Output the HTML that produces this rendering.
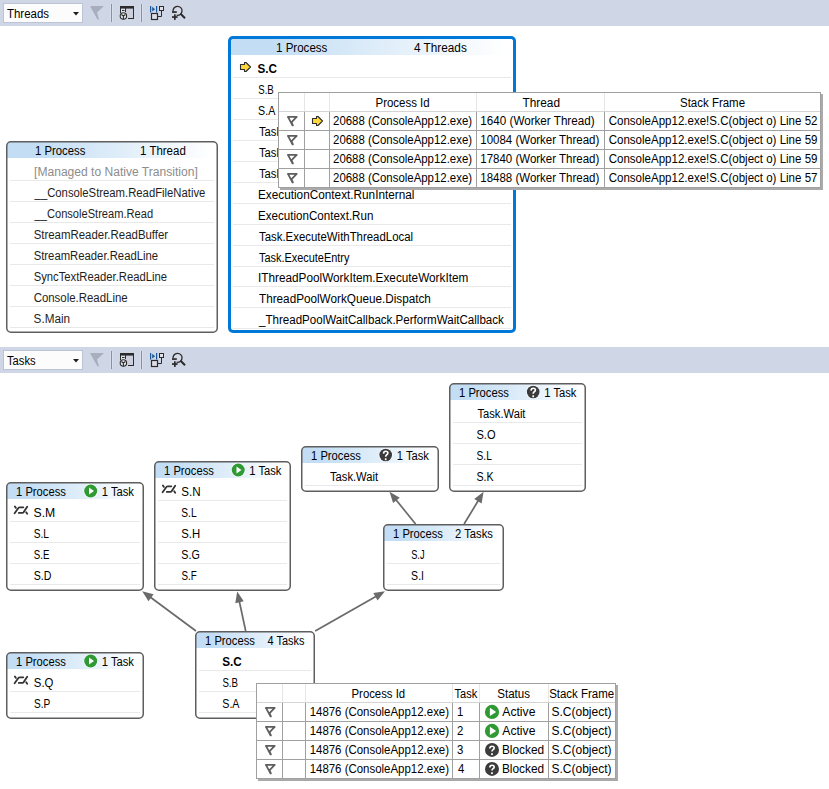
<!DOCTYPE html>
<html><head><meta charset="utf-8"><style>
html,body{margin:0;padding:0;background:#fff;overflow:hidden}
svg{display:block}
text{font-family:"Liberation Sans",sans-serif;font-size:12px}
</style></head><body>
<svg width="829" height="789" viewBox="0 0 829 789">
<rect width="829" height="789" fill="#ffffff"/>
<rect x="0" y="0" width="829" height="26" fill="#cfd6e5"/>
<rect x="3.5" y="3.5" width="79" height="19" fill="#fcfcfc" stroke="#bcc4d6" stroke-width="1"/>
<path d="M73 12 h6 l-3 3.5 z" fill="#1e1e1e"/>
<path d="M90 6 H104 L97 12.5 L99 19.5 L97.5 19.5 Z" fill="#a8aebb"/>
<rect x="111" y="4" width="1" height="18" fill="#8592a6"/>
<rect x="110" y="4" width="1" height="18" fill="#d8deeb"/>
<rect x="112" y="4" width="1" height="18" fill="#d8deeb"/>
<rect x="141" y="4" width="1" height="18" fill="#8592a6"/>
<rect x="140" y="4" width="1" height="18" fill="#d8deeb"/>
<rect x="142" y="4" width="1" height="18" fill="#d8deeb"/>
<rect x="126" y="9" width="7" height="9" fill="#cdd0dc"/>
<rect x="121" y="8" width="4" height="10" fill="#dde1ee"/>
<rect x="120" y="6" width="14" height="2.6" fill="#2b2b2b"/>
<rect x="120" y="6" width="1" height="7" fill="#2b2b2b"/>
<rect x="133" y="6" width="1" height="13" fill="#2b2b2b"/>
<rect x="128" y="18" width="6" height="1" fill="#2b2b2b"/>
<rect x="125" y="8" width="1" height="4" fill="#2b2b2b"/>
<rect x="122" y="10" width="2.5" height="1" fill="#2b2b2b"/>
<circle cx="123.4" cy="16" r="3.2" fill="#e4e6f2" stroke="#2b2b2b" stroke-width="1.1"/>
<path d="M123.4 16 L121.4 14.5 M123.4 16 L125.4 14.5 M123.4 16 V19.3" stroke="#2b2b2b" stroke-width="1.1" fill="none"/>
<rect x="150" y="6" width="1.2" height="6.5" fill="#1b5597"/>
<rect x="156" y="6" width="1.2" height="6.5" fill="#1b5597"/>
<path d="M152.2 6.8 l2.9 2.4 l-2.9 2.4 z" fill="#1b5597"/>
<rect x="159.5" y="6.5" width="4" height="4" fill="#e0e0ea" stroke="#2b2b2b" stroke-width="1"/>
<path d="M161.5 11 V16.5 H157" fill="none" stroke="#2b2b2b" stroke-width="1"/>
<rect x="151.5" y="13.5" width="6" height="6" fill="#dcdde8" stroke="#2b2b2b" stroke-width="1.2"/>
<path d="M173.1 11.6 A4.5 4.5 0 1 1 176.6 15.2" fill="#d6d9e6" stroke="#2b2b2b" stroke-width="1.3"/>
<path d="M180.6 13.8 L185 18.2" stroke="#2b2b2b" stroke-width="2"/>
<rect x="172" y="11.2" width="4.8" height="1.7" fill="#2b2b2b"/>
<rect x="172" y="16.2" width="5.6" height="1.7" fill="#2b2b2b"/>
<rect x="174" y="14.3" width="1.7" height="5.6" fill="#2b2b2b"/>
<text x="7.00" y="18" textLength="42.03" lengthAdjust="spacingAndGlyphs" fill="#000000">Threads</text>
<defs><linearGradient id="n1g" x1="0" x2="1" y1="0" y2="0"><stop offset="0.13" stop-color="#c2ddf4"/><stop offset="0.98" stop-color="#ffffff"/></linearGradient></defs>
<rect x="6.75" y="141.75" width="210.5" height="190.5" rx="4.2" fill="#ffffff"/>
<path d="M7 158 V145.5 a3.5 3.5 0 0 1 3.5 -3.5 H213.5 a3.5 3.5 0 0 1 3.5 3.5 V158 Z" fill="url(#n1g)"/>
<rect x="10" y="180" width="204" height="1" fill="#e9e9e9"/>
<rect x="10" y="201" width="204" height="1" fill="#e9e9e9"/>
<rect x="10" y="222" width="204" height="1" fill="#e9e9e9"/>
<rect x="10" y="243" width="204" height="1" fill="#e9e9e9"/>
<rect x="10" y="264" width="204" height="1" fill="#e9e9e9"/>
<rect x="10" y="285" width="204" height="1" fill="#e9e9e9"/>
<rect x="10" y="306" width="204" height="1" fill="#e9e9e9"/>
<rect x="10" y="327" width="204" height="1" fill="#e9e9e9"/>
<rect x="6.75" y="141.75" width="210.5" height="190.5" rx="4.2" fill="none" stroke="#5e5e5e" stroke-width="1.5"/>
<text x="35.06" y="155" textLength="50.28" lengthAdjust="spacingAndGlyphs" fill="#000000">1 Process</text>
<text x="140.04" y="155" textLength="45.73" lengthAdjust="spacingAndGlyphs" fill="#000000">1 Thread</text>
<text x="34.09" y="176" textLength="163.68" lengthAdjust="spacingAndGlyphs" fill="#8c8c8c">[Managed to Native Transition]</text>
<text x="34.60" y="197" textLength="170.81" lengthAdjust="spacingAndGlyphs" fill="#1e1e1e">__ConsoleStream.ReadFileNative</text>
<text x="34.60" y="218" textLength="118.47" lengthAdjust="spacingAndGlyphs" fill="#1e1e1e">__ConsoleStream.Read</text>
<text x="33.65" y="239" textLength="134.55" lengthAdjust="spacingAndGlyphs" fill="#1e1e1e">StreamReader.ReadBuffer</text>
<text x="33.66" y="260" textLength="124.43" lengthAdjust="spacingAndGlyphs" fill="#1e1e1e">StreamReader.ReadLine</text>
<text x="33.66" y="281" textLength="133.43" lengthAdjust="spacingAndGlyphs" fill="#1e1e1e">SyncTextReader.ReadLine</text>
<text x="33.65" y="302" textLength="94.07" lengthAdjust="spacingAndGlyphs" fill="#1e1e1e">Console.ReadLine</text>
<text x="33.62" y="323" textLength="36.53" lengthAdjust="spacingAndGlyphs" fill="#1e1e1e">S.Main</text>
<defs><linearGradient id="n2g" x1="0" x2="1" y1="0" y2="0"><stop offset="0.13" stop-color="#c2ddf4"/><stop offset="0.98" stop-color="#ffffff"/></linearGradient></defs>
<rect x="228" y="36" width="288" height="297" rx="5" fill="#0078d7"/>
<rect x="231" y="39" width="282" height="291" rx="2.5" fill="#ffffff"/>
<path d="M231 55 V41.5 a2.5 2.5 0 0 1 2.5 -2.5 H510.5 a2.5 2.5 0 0 1 2.5 2.5 V55 Z" fill="url(#n2g)"/>
<rect x="233" y="77" width="278" height="1" fill="#e9e9e9"/>
<rect x="233" y="98" width="278" height="1" fill="#e9e9e9"/>
<rect x="233" y="119" width="278" height="1" fill="#e9e9e9"/>
<rect x="233" y="140" width="278" height="1" fill="#e9e9e9"/>
<rect x="233" y="161" width="278" height="1" fill="#e9e9e9"/>
<rect x="233" y="182" width="278" height="1" fill="#e9e9e9"/>
<rect x="233" y="203" width="278" height="1" fill="#e9e9e9"/>
<rect x="233" y="224" width="278" height="1" fill="#e9e9e9"/>
<rect x="233" y="245" width="278" height="1" fill="#e9e9e9"/>
<rect x="233" y="266" width="278" height="1" fill="#e9e9e9"/>
<rect x="233" y="286" width="278" height="1" fill="#e9e9e9"/>
<rect x="233" y="307" width="278" height="1" fill="#e9e9e9"/>
<rect x="233" y="328" width="278" height="1" fill="#e9e9e9"/>
<text x="276.04" y="52" textLength="51.31" lengthAdjust="spacingAndGlyphs" fill="#000000">1 Process</text>
<text x="414.00" y="52" textLength="52.80" lengthAdjust="spacingAndGlyphs" fill="#000000">4 Threads</text>
<path d="M240.5 64.5 H244.5 V62.5 H246 L250.5 67 L246 71.5 H244.5 V69.5 H240.5 Z" fill="#ffd83b" stroke="#2e2e2e" stroke-width="1.1" stroke-linejoin="round"/>
<text x="257.53" y="73" textLength="19.46" lengthAdjust="spacingAndGlyphs" fill="#000000" font-weight="bold">S.C</text>
<text x="258.19" y="94" textLength="15.58" lengthAdjust="spacingAndGlyphs" fill="#000000">S.B</text>
<text x="258.11" y="115" textLength="17.19" lengthAdjust="spacingAndGlyphs" fill="#000000">S.A</text>
<text x="259.00" y="136" textLength="48.09" lengthAdjust="spacingAndGlyphs" fill="#000000">Task.Wait</text>
<text x="259.00" y="157" textLength="48.09" lengthAdjust="spacingAndGlyphs" fill="#000000">Task.Wait</text>
<text x="259.00" y="178" textLength="48.09" lengthAdjust="spacingAndGlyphs" fill="#000000">Task.Wait</text>
<text x="258.02" y="199" textLength="156.41" lengthAdjust="spacingAndGlyphs" fill="#000000">ExecutionContext.RunInternal</text>
<text x="258.03" y="220" textLength="115.36" lengthAdjust="spacingAndGlyphs" fill="#000000">ExecutionContext.Run</text>
<text x="259.00" y="241" textLength="154.07" lengthAdjust="spacingAndGlyphs" fill="#000000">Task.ExecuteWithThreadLocal</text>
<text x="259.00" y="262" textLength="90.43" lengthAdjust="spacingAndGlyphs" fill="#000000">Task.ExecuteEntry</text>
<text x="258.02" y="282" textLength="210.29" lengthAdjust="spacingAndGlyphs" fill="#000000">IThreadPoolWorkItem.ExecuteWorkItem</text>
<text x="259.00" y="303" textLength="171.85" lengthAdjust="spacingAndGlyphs" fill="#000000">ThreadPoolWorkQueue.Dispatch</text>
<text x="259.00" y="324" textLength="244.88" lengthAdjust="spacingAndGlyphs" fill="#000000">_ThreadPoolWaitCallback.PerformWaitCallback</text>
<rect x="280" y="94" width="543" height="96" fill="#aaaaaa"/>
<rect x="278" y="92" width="543" height="96" fill="#ffffff"/>
<rect x="304" y="93" width="1" height="18" fill="#e6e6e6"/>
<rect x="304" y="112" width="1" height="75" fill="#a0a0a0"/>
<rect x="329" y="93" width="1" height="18" fill="#e6e6e6"/>
<rect x="329" y="112" width="1" height="75" fill="#a0a0a0"/>
<rect x="476" y="93" width="1" height="18" fill="#e6e6e6"/>
<rect x="476" y="112" width="1" height="75" fill="#a0a0a0"/>
<rect x="604" y="93" width="1" height="18" fill="#e6e6e6"/>
<rect x="604" y="112" width="1" height="75" fill="#a0a0a0"/>
<rect x="279" y="111" width="541" height="1" fill="#d4d4d4"/>
<rect x="279" y="130" width="541" height="1" fill="#a0a0a0"/>
<rect x="279" y="149" width="541" height="1" fill="#a0a0a0"/>
<rect x="279" y="168" width="541" height="1" fill="#a0a0a0"/>
<rect x="278.5" y="92.5" width="542" height="95" fill="none" stroke="#a0a0a0" stroke-width="1"/>
<text x="375.55" y="107" textLength="54.13" lengthAdjust="spacingAndGlyphs" fill="#000000">Process Id</text>
<text x="522.50" y="107" textLength="37.52" lengthAdjust="spacingAndGlyphs" fill="#000000">Thread</text>
<text x="680.04" y="107" textLength="64.97" lengthAdjust="spacingAndGlyphs" fill="#000000">Stack Frame</text>
<text x="333.05" y="125" textLength="139.01" lengthAdjust="spacingAndGlyphs" fill="#000000">20688 (ConsoleApp12.exe)</text>
<text x="480.33" y="125" textLength="114.26" lengthAdjust="spacingAndGlyphs" fill="#000000">1640 (Worker Thread)</text>
<text x="608.74" y="125" textLength="208.72" lengthAdjust="spacingAndGlyphs" fill="#000000">ConsoleApp12.exe!S.C(object o) Line 52</text>
<path d="M287.9 116.9 H296.7 L291.4 122.3 M288.1 117.1 L292.5 125.4 M291.3 122 L292.9 125.4" fill="none" stroke="#5e5e5e" stroke-width="1.8" stroke-linecap="round" stroke-linejoin="round"/>
<text x="333.05" y="144" textLength="139.01" lengthAdjust="spacingAndGlyphs" fill="#000000">20688 (ConsoleApp12.exe)</text>
<text x="480.34" y="144" textLength="118.94" lengthAdjust="spacingAndGlyphs" fill="#000000">10084 (Worker Thread)</text>
<text x="608.74" y="144" textLength="208.72" lengthAdjust="spacingAndGlyphs" fill="#000000">ConsoleApp12.exe!S.C(object o) Line 59</text>
<path d="M287.9 135.9 H296.7 L291.4 141.3 M288.1 136.1 L292.5 144.4 M291.3 141 L292.9 144.4" fill="none" stroke="#5e5e5e" stroke-width="1.8" stroke-linecap="round" stroke-linejoin="round"/>
<text x="333.05" y="163" textLength="139.01" lengthAdjust="spacingAndGlyphs" fill="#000000">20688 (ConsoleApp12.exe)</text>
<text x="480.34" y="163" textLength="118.94" lengthAdjust="spacingAndGlyphs" fill="#000000">17840 (Worker Thread)</text>
<text x="608.74" y="163" textLength="208.72" lengthAdjust="spacingAndGlyphs" fill="#000000">ConsoleApp12.exe!S.C(object o) Line 59</text>
<path d="M287.9 154.9 H296.7 L291.4 160.3 M288.1 155.1 L292.5 163.4 M291.3 160 L292.9 163.4" fill="none" stroke="#5e5e5e" stroke-width="1.8" stroke-linecap="round" stroke-linejoin="round"/>
<text x="333.05" y="182" textLength="139.01" lengthAdjust="spacingAndGlyphs" fill="#000000">20688 (ConsoleApp12.exe)</text>
<text x="480.34" y="182" textLength="118.94" lengthAdjust="spacingAndGlyphs" fill="#000000">18488 (Worker Thread)</text>
<text x="608.74" y="182" textLength="208.72" lengthAdjust="spacingAndGlyphs" fill="#000000">ConsoleApp12.exe!S.C(object o) Line 57</text>
<path d="M287.9 173.9 H296.7 L291.4 179.3 M288.1 174.1 L292.5 182.4 M291.3 179 L292.9 182.4" fill="none" stroke="#5e5e5e" stroke-width="1.8" stroke-linecap="round" stroke-linejoin="round"/>
<path d="M312.5 118.5 H316.5 V116.5 H318 L322.5 121 L318 125.5 H316.5 V123.5 H312.5 Z" fill="#ffd83b" stroke="#2e2e2e" stroke-width="1.1" stroke-linejoin="round"/>
<rect x="0" y="347" width="829" height="26" fill="#cfd6e5"/>
<rect x="3.5" y="350.5" width="79" height="19" fill="#fcfcfc" stroke="#bcc4d6" stroke-width="1"/>
<path d="M73 359 h6 l-3 3.5 z" fill="#1e1e1e"/>
<path d="M90 353 H104 L97 359.5 L99 366.5 L97.5 366.5 Z" fill="#a8aebb"/>
<rect x="111" y="351" width="1" height="18" fill="#8592a6"/>
<rect x="110" y="351" width="1" height="18" fill="#d8deeb"/>
<rect x="112" y="351" width="1" height="18" fill="#d8deeb"/>
<rect x="141" y="351" width="1" height="18" fill="#8592a6"/>
<rect x="140" y="351" width="1" height="18" fill="#d8deeb"/>
<rect x="142" y="351" width="1" height="18" fill="#d8deeb"/>
<rect x="126" y="356" width="7" height="9" fill="#cdd0dc"/>
<rect x="121" y="355" width="4" height="10" fill="#dde1ee"/>
<rect x="120" y="353" width="14" height="2.6" fill="#2b2b2b"/>
<rect x="120" y="353" width="1" height="7" fill="#2b2b2b"/>
<rect x="133" y="353" width="1" height="13" fill="#2b2b2b"/>
<rect x="128" y="365" width="6" height="1" fill="#2b2b2b"/>
<rect x="125" y="355" width="1" height="4" fill="#2b2b2b"/>
<rect x="122" y="357" width="2.5" height="1" fill="#2b2b2b"/>
<circle cx="123.4" cy="363" r="3.2" fill="#e4e6f2" stroke="#2b2b2b" stroke-width="1.1"/>
<path d="M123.4 363 L121.4 361.5 M123.4 363 L125.4 361.5 M123.4 363 V366.3" stroke="#2b2b2b" stroke-width="1.1" fill="none"/>
<rect x="150" y="353" width="1.2" height="6.5" fill="#1b5597"/>
<rect x="156" y="353" width="1.2" height="6.5" fill="#1b5597"/>
<path d="M152.2 353.8 l2.9 2.4 l-2.9 2.4 z" fill="#1b5597"/>
<rect x="159.5" y="353.5" width="4" height="4" fill="#e0e0ea" stroke="#2b2b2b" stroke-width="1"/>
<path d="M161.5 358 V363.5 H157" fill="none" stroke="#2b2b2b" stroke-width="1"/>
<rect x="151.5" y="360.5" width="6" height="6" fill="#dcdde8" stroke="#2b2b2b" stroke-width="1.2"/>
<path d="M173.1 358.6 A4.5 4.5 0 1 1 176.6 362.2" fill="#d6d9e6" stroke="#2b2b2b" stroke-width="1.3"/>
<path d="M180.6 360.8 L185 365.2" stroke="#2b2b2b" stroke-width="2"/>
<rect x="172" y="358.2" width="4.8" height="1.7" fill="#2b2b2b"/>
<rect x="172" y="363.2" width="5.6" height="1.7" fill="#2b2b2b"/>
<rect x="174" y="361.3" width="1.7" height="5.6" fill="#2b2b2b"/>
<text x="7.00" y="365" textLength="28.64" lengthAdjust="spacingAndGlyphs" fill="#000000">Tasks</text>
<defs><linearGradient id="k1g" x1="0" x2="1" y1="0" y2="0"><stop offset="0.13" stop-color="#c2ddf4"/><stop offset="0.98" stop-color="#ffffff"/></linearGradient></defs>
<rect x="6.75" y="482.75" width="136.5" height="107.5" rx="4.2" fill="#ffffff"/>
<path d="M7 499 V486.5 a3.5 3.5 0 0 1 3.5 -3.5 H139.5 a3.5 3.5 0 0 1 3.5 3.5 V499 Z" fill="url(#k1g)"/>
<rect x="10" y="521" width="130" height="1" fill="#e9e9e9"/>
<rect x="10" y="542" width="130" height="1" fill="#e9e9e9"/>
<rect x="10" y="563" width="130" height="1" fill="#e9e9e9"/>
<rect x="10" y="584" width="130" height="1" fill="#e9e9e9"/>
<rect x="6.75" y="482.75" width="136.5" height="107.5" rx="4.2" fill="none" stroke="#5e5e5e" stroke-width="1.5"/>
<text x="16.07" y="496" textLength="49.77" lengthAdjust="spacingAndGlyphs" fill="#000000">1 Process</text>
<text x="101.77" y="496" textLength="32.17" lengthAdjust="spacingAndGlyphs" fill="#000000">1 Task</text>
<circle cx="90.7" cy="491" r="7.2" fill="#ffffff" fill-opacity="0.8"/>
<circle cx="90.7" cy="491" r="6.5" fill="#2f9a33"/>
<path d="M89.0 487.4 L94.0 491 L89.0 494.6 Z" fill="#ffffff"/>
<text x="33.58" y="517" textLength="21.68" lengthAdjust="spacingAndGlyphs" fill="#000000">S.M</text>
<text x="33.75" y="538" textLength="15.26" lengthAdjust="spacingAndGlyphs" fill="#000000">S.L</text>
<text x="33.79" y="559" textLength="15.58" lengthAdjust="spacingAndGlyphs" fill="#000000">S.E</text>
<text x="33.72" y="580" textLength="17.70" lengthAdjust="spacingAndGlyphs" fill="#000000">S.D</text>
<path d="M14.6 513.3 L18.6 507.8 Q19 507.3 19.8 507.3 H23.3" fill="none" stroke="#333333" stroke-width="1.8" stroke-linecap="round"/>
<path d="M27.2 506.7 L23.6 512.2 Q23.2 512.9 22.4 512.9 H18.8" fill="none" stroke="#333333" stroke-width="1.8" stroke-linecap="round"/>
<path d="M14.9 506.4 L15.9 507.9 M26.2 512.3 L27.2 513.7" fill="none" stroke="#333333" stroke-width="1.8" stroke-linecap="round"/>
<defs><linearGradient id="k2g" x1="0" x2="1" y1="0" y2="0"><stop offset="0.13" stop-color="#c2ddf4"/><stop offset="0.98" stop-color="#ffffff"/></linearGradient></defs>
<rect x="154.75" y="461.75" width="135.5" height="128.5" rx="4.2" fill="#ffffff"/>
<path d="M155 478 V465.5 a3.5 3.5 0 0 1 3.5 -3.5 H286.5 a3.5 3.5 0 0 1 3.5 3.5 V478 Z" fill="url(#k2g)"/>
<rect x="158" y="500" width="129" height="1" fill="#e9e9e9"/>
<rect x="158" y="521" width="129" height="1" fill="#e9e9e9"/>
<rect x="158" y="542" width="129" height="1" fill="#e9e9e9"/>
<rect x="158" y="563" width="129" height="1" fill="#e9e9e9"/>
<rect x="158" y="584" width="129" height="1" fill="#e9e9e9"/>
<rect x="154.75" y="461.75" width="135.5" height="128.5" rx="4.2" fill="none" stroke="#5e5e5e" stroke-width="1.5"/>
<text x="164.07" y="475" textLength="49.77" lengthAdjust="spacingAndGlyphs" fill="#000000">1 Process</text>
<text x="249.27" y="475" textLength="32.17" lengthAdjust="spacingAndGlyphs" fill="#000000">1 Task</text>
<circle cx="238.2" cy="470" r="7.2" fill="#ffffff" fill-opacity="0.8"/>
<circle cx="238.2" cy="470" r="6.5" fill="#2f9a33"/>
<path d="M236.5 466.4 L241.5 470 L236.5 473.6 Z" fill="#ffffff"/>
<text x="181.23" y="496" textLength="19.35" lengthAdjust="spacingAndGlyphs" fill="#000000">S.N</text>
<text x="181.35" y="517" textLength="15.26" lengthAdjust="spacingAndGlyphs" fill="#000000">S.L</text>
<text x="181.26" y="538" textLength="18.90" lengthAdjust="spacingAndGlyphs" fill="#000000">S.H</text>
<text x="181.31" y="559" textLength="18.50" lengthAdjust="spacingAndGlyphs" fill="#000000">S.G</text>
<text x="181.38" y="580" textLength="15.27" lengthAdjust="spacingAndGlyphs" fill="#000000">S.F</text>
<path d="M162.6 492.3 L166.6 486.8 Q167 486.3 167.8 486.3 H171.3" fill="none" stroke="#333333" stroke-width="1.8" stroke-linecap="round"/>
<path d="M175.2 485.7 L171.6 491.2 Q171.2 491.9 170.4 491.9 H166.8" fill="none" stroke="#333333" stroke-width="1.8" stroke-linecap="round"/>
<path d="M162.9 485.4 L163.9 486.9 M174.2 491.3 L175.2 492.7" fill="none" stroke="#333333" stroke-width="1.8" stroke-linecap="round"/>
<defs><linearGradient id="k3g" x1="0" x2="1" y1="0" y2="0"><stop offset="0.13" stop-color="#c2ddf4"/><stop offset="0.98" stop-color="#ffffff"/></linearGradient></defs>
<rect x="301.75" y="446.75" width="136.5" height="44.5" rx="4.2" fill="#ffffff"/>
<path d="M302 463 V450.5 a3.5 3.5 0 0 1 3.5 -3.5 H434.5 a3.5 3.5 0 0 1 3.5 3.5 V463 Z" fill="url(#k3g)"/>
<rect x="305" y="485" width="130" height="1" fill="#e9e9e9"/>
<rect x="301.75" y="446.75" width="136.5" height="44.5" rx="4.2" fill="none" stroke="#5e5e5e" stroke-width="1.5"/>
<text x="311.07" y="460" textLength="49.77" lengthAdjust="spacingAndGlyphs" fill="#000000">1 Process</text>
<text x="396.77" y="460" textLength="32.17" lengthAdjust="spacingAndGlyphs" fill="#000000">1 Task</text>
<circle cx="385.7" cy="455" r="7.0" fill="#ffffff" fill-opacity="0.8"/>
<circle cx="385.7" cy="455" r="6.3" fill="#3b3b3b"/>
<path d="M383.5 453.6 Q383.59999999999997 451.3 385.7 451.3 Q387.9 451.3 387.9 453.1 Q387.9 454.2 386.5 455 Q385.7 455.5 385.7 456.7" fill="none" stroke="#ffffff" stroke-width="1.6"/>
<rect x="384.84999999999997" y="458.3" width="1.7" height="1.9" fill="#ffffff"/>
<text x="330.00" y="481" textLength="48.09" lengthAdjust="spacingAndGlyphs" fill="#000000">Task.Wait</text>
<defs><linearGradient id="k4g" x1="0" x2="1" y1="0" y2="0"><stop offset="0.13" stop-color="#c2ddf4"/><stop offset="0.98" stop-color="#ffffff"/></linearGradient></defs>
<rect x="449.75" y="383.75" width="135.5" height="107.5" rx="4.2" fill="#ffffff"/>
<path d="M450 400 V387.5 a3.5 3.5 0 0 1 3.5 -3.5 H581.5 a3.5 3.5 0 0 1 3.5 3.5 V400 Z" fill="url(#k4g)"/>
<rect x="453" y="422" width="129" height="1" fill="#e9e9e9"/>
<rect x="453" y="443" width="129" height="1" fill="#e9e9e9"/>
<rect x="453" y="464" width="129" height="1" fill="#e9e9e9"/>
<rect x="453" y="485" width="129" height="1" fill="#e9e9e9"/>
<rect x="449.75" y="383.75" width="135.5" height="107.5" rx="4.2" fill="none" stroke="#5e5e5e" stroke-width="1.5"/>
<text x="459.07" y="397" textLength="49.77" lengthAdjust="spacingAndGlyphs" fill="#000000">1 Process</text>
<text x="544.27" y="397" textLength="32.17" lengthAdjust="spacingAndGlyphs" fill="#000000">1 Task</text>
<circle cx="533.2" cy="392" r="7.0" fill="#ffffff" fill-opacity="0.8"/>
<circle cx="533.2" cy="392" r="6.3" fill="#3b3b3b"/>
<path d="M531.0 390.6 Q531.1 388.3 533.2 388.3 Q535.4000000000001 388.3 535.4000000000001 390.1 Q535.4000000000001 391.2 534.0 392 Q533.2 392.5 533.2 393.7" fill="none" stroke="#ffffff" stroke-width="1.6"/>
<rect x="532.35" y="395.3" width="1.7" height="1.9" fill="#ffffff"/>
<text x="477.40" y="418" textLength="48.09" lengthAdjust="spacingAndGlyphs" fill="#000000">Task.Wait</text>
<text x="476.48" y="439" textLength="19.04" lengthAdjust="spacingAndGlyphs" fill="#000000">S.O</text>
<text x="476.55" y="460" textLength="15.26" lengthAdjust="spacingAndGlyphs" fill="#000000">S.L</text>
<text x="476.51" y="481" textLength="17.19" lengthAdjust="spacingAndGlyphs" fill="#000000">S.K</text>
<defs><linearGradient id="k5g" x1="0" x2="1" y1="0" y2="0"><stop offset="0.13" stop-color="#c2ddf4"/><stop offset="0.98" stop-color="#ffffff"/></linearGradient></defs>
<rect x="383.75" y="524.75" width="119.5" height="65.5" rx="4.2" fill="#ffffff"/>
<path d="M384 541 V528.5 a3.5 3.5 0 0 1 3.5 -3.5 H499.5 a3.5 3.5 0 0 1 3.5 3.5 V541 Z" fill="url(#k5g)"/>
<rect x="387" y="563" width="113" height="1" fill="#e9e9e9"/>
<rect x="387" y="584" width="113" height="1" fill="#e9e9e9"/>
<rect x="383.75" y="524.75" width="119.5" height="65.5" rx="4.2" fill="none" stroke="#5e5e5e" stroke-width="1.5"/>
<text x="393.07" y="538" textLength="49.77" lengthAdjust="spacingAndGlyphs" fill="#000000">1 Process</text>
<text x="455.06" y="538" textLength="37.87" lengthAdjust="spacingAndGlyphs" fill="#000000">2 Tasks</text>
<text x="411.23" y="559" textLength="13.33" lengthAdjust="spacingAndGlyphs" fill="#000000">S.J</text>
<text x="411.12" y="580" textLength="12.87" lengthAdjust="spacingAndGlyphs" fill="#000000">S.I</text>
<defs><linearGradient id="k6g" x1="0" x2="1" y1="0" y2="0"><stop offset="0.13" stop-color="#c2ddf4"/><stop offset="0.98" stop-color="#ffffff"/></linearGradient></defs>
<rect x="195.75" y="631.75" width="118.5" height="86.5" rx="4.2" fill="#ffffff"/>
<path d="M196 648 V635.5 a3.5 3.5 0 0 1 3.5 -3.5 H310.5 a3.5 3.5 0 0 1 3.5 3.5 V648 Z" fill="url(#k6g)"/>
<rect x="199" y="670" width="112" height="1" fill="#e9e9e9"/>
<rect x="199" y="691" width="112" height="1" fill="#e9e9e9"/>
<rect x="199" y="712" width="112" height="1" fill="#e9e9e9"/>
<rect x="195.75" y="631.75" width="118.5" height="86.5" rx="4.2" fill="none" stroke="#5e5e5e" stroke-width="1.5"/>
<text x="205.07" y="645" textLength="49.77" lengthAdjust="spacingAndGlyphs" fill="#000000">1 Process</text>
<text x="267.50" y="645" textLength="36.93" lengthAdjust="spacingAndGlyphs" fill="#000000">4 Tasks</text>
<text x="222.23" y="666" textLength="19.46" lengthAdjust="spacingAndGlyphs" fill="#000000" font-weight="bold">S.C</text>
<text x="222.39" y="687" textLength="15.58" lengthAdjust="spacingAndGlyphs" fill="#000000">S.B</text>
<text x="222.31" y="708" textLength="17.19" lengthAdjust="spacingAndGlyphs" fill="#000000">S.A</text>
<defs><linearGradient id="k7g" x1="0" x2="1" y1="0" y2="0"><stop offset="0.13" stop-color="#c2ddf4"/><stop offset="0.98" stop-color="#ffffff"/></linearGradient></defs>
<rect x="6.75" y="652.75" width="136.5" height="65.5" rx="4.2" fill="#ffffff"/>
<path d="M7 669 V656.5 a3.5 3.5 0 0 1 3.5 -3.5 H139.5 a3.5 3.5 0 0 1 3.5 3.5 V669 Z" fill="url(#k7g)"/>
<rect x="10" y="691" width="130" height="1" fill="#e9e9e9"/>
<rect x="10" y="712" width="130" height="1" fill="#e9e9e9"/>
<rect x="6.75" y="652.75" width="136.5" height="65.5" rx="4.2" fill="none" stroke="#5e5e5e" stroke-width="1.5"/>
<text x="16.07" y="666" textLength="49.77" lengthAdjust="spacingAndGlyphs" fill="#000000">1 Process</text>
<text x="101.77" y="666" textLength="32.17" lengthAdjust="spacingAndGlyphs" fill="#000000">1 Task</text>
<circle cx="90.7" cy="661" r="7.2" fill="#ffffff" fill-opacity="0.8"/>
<circle cx="90.7" cy="661" r="6.5" fill="#2f9a33"/>
<path d="M89.0 657.4 L94.0 661 L89.0 664.6 Z" fill="#ffffff"/>
<text x="33.85" y="687" textLength="19.58" lengthAdjust="spacingAndGlyphs" fill="#000000">S.Q</text>
<text x="33.96" y="708" textLength="16.33" lengthAdjust="spacingAndGlyphs" fill="#000000">S.P</text>
<path d="M14.6 683.3 L18.6 677.8 Q19 677.3 19.8 677.3 H23.3" fill="none" stroke="#333333" stroke-width="1.8" stroke-linecap="round"/>
<path d="M27.2 676.7 L23.6 682.2 Q23.2 682.9 22.4 682.9 H18.8" fill="none" stroke="#333333" stroke-width="1.8" stroke-linecap="round"/>
<path d="M14.9 676.4 L15.9 677.9 M26.2 682.3 L27.2 683.7" fill="none" stroke="#333333" stroke-width="1.8" stroke-linecap="round"/>
<line x1="196.00" y1="631.00" x2="149.44" y2="596.55" stroke="#6a6a6a" stroke-width="1.7"/>
<path d="M142.20 591.20 L153.60 594.29 L148.49 601.20 Z" fill="#6a6a6a"/>
<line x1="245.70" y1="631.00" x2="239.09" y2="600.30" stroke="#6a6a6a" stroke-width="1.7"/>
<path d="M237.20 591.50 L243.72 601.35 L235.31 603.16 Z" fill="#6a6a6a"/>
<line x1="315.20" y1="631.00" x2="377.18" y2="595.66" stroke="#6a6a6a" stroke-width="1.7"/>
<path d="M385.00 591.20 L377.57 600.38 L373.31 592.91 Z" fill="#6a6a6a"/>
<line x1="415.60" y1="524.00" x2="395.17" y2="498.79" stroke="#6a6a6a" stroke-width="1.7"/>
<path d="M389.50 491.80 L399.77 497.64 L393.09 503.05 Z" fill="#6a6a6a"/>
<line x1="464.10" y1="524.00" x2="478.94" y2="499.50" stroke="#6a6a6a" stroke-width="1.7"/>
<path d="M483.60 491.80 L481.58 503.44 L474.22 498.98 Z" fill="#6a6a6a"/>
<rect x="258" y="685" width="360" height="96" fill="#aaaaaa"/>
<rect x="256" y="683" width="360" height="96" fill="#ffffff"/>
<rect x="282" y="684" width="1" height="18" fill="#e6e6e6"/>
<rect x="282" y="703" width="1" height="75" fill="#a0a0a0"/>
<rect x="305" y="684" width="1" height="18" fill="#e6e6e6"/>
<rect x="305" y="703" width="1" height="75" fill="#a0a0a0"/>
<rect x="452" y="684" width="1" height="18" fill="#e6e6e6"/>
<rect x="452" y="703" width="1" height="75" fill="#a0a0a0"/>
<rect x="479" y="684" width="1" height="18" fill="#e6e6e6"/>
<rect x="479" y="703" width="1" height="75" fill="#a0a0a0"/>
<rect x="548" y="684" width="1" height="18" fill="#e6e6e6"/>
<rect x="548" y="703" width="1" height="75" fill="#a0a0a0"/>
<rect x="257" y="702" width="358" height="1" fill="#d4d4d4"/>
<rect x="257" y="721" width="358" height="1" fill="#a0a0a0"/>
<rect x="257" y="740" width="358" height="1" fill="#a0a0a0"/>
<rect x="257" y="759" width="358" height="1" fill="#a0a0a0"/>
<rect x="256.5" y="683.5" width="359" height="95" fill="none" stroke="#a0a0a0" stroke-width="1"/>
<text x="351.55" y="698" textLength="53.61" lengthAdjust="spacingAndGlyphs" fill="#000000">Process Id</text>
<text x="454.50" y="698" textLength="22.71" lengthAdjust="spacingAndGlyphs" fill="#000000">Task</text>
<text x="497.24" y="698" textLength="32.79" lengthAdjust="spacingAndGlyphs" fill="#000000">Status</text>
<text x="549.14" y="698" textLength="65.07" lengthAdjust="spacingAndGlyphs" fill="#000000">Stack Frame</text>
<text x="309.65" y="715.5" textLength="139.41" lengthAdjust="spacingAndGlyphs" fill="#000000">14876 (ConsoleApp12.exe)</text>
<text x="457.05" y="715.5" textLength="6.35" lengthAdjust="spacingAndGlyphs" fill="#000000">1</text>
<text x="502.30" y="715.5" textLength="33.10" lengthAdjust="spacingAndGlyphs" fill="#000000">Active</text>
<circle cx="492" cy="711.9" r="7.8" fill="#ffffff" fill-opacity="0.8"/>
<circle cx="492" cy="711.9" r="7.1" fill="#2f9a33"/>
<path d="M489.9 707.8 L496.2 711.9 L489.9 716.0 Z" fill="#ffffff"/>
<text x="551.50" y="715.5" textLength="60.03" lengthAdjust="spacingAndGlyphs" fill="#000000">S.C(object)</text>
<path d="M265.9 707.9 H274.7 L269.4 713.3 M266.1 708.1 L270.5 716.4 M269.3 713 L270.9 716.4" fill="none" stroke="#5e5e5e" stroke-width="1.8" stroke-linecap="round" stroke-linejoin="round"/>
<text x="309.65" y="734.5" textLength="139.41" lengthAdjust="spacingAndGlyphs" fill="#000000">14876 (ConsoleApp12.exe)</text>
<text x="457.05" y="734.5" textLength="6.35" lengthAdjust="spacingAndGlyphs" fill="#000000">2</text>
<text x="502.30" y="734.5" textLength="33.10" lengthAdjust="spacingAndGlyphs" fill="#000000">Active</text>
<circle cx="492" cy="730.9" r="7.8" fill="#ffffff" fill-opacity="0.8"/>
<circle cx="492" cy="730.9" r="7.1" fill="#2f9a33"/>
<path d="M489.9 726.8 L496.2 730.9 L489.9 735.0 Z" fill="#ffffff"/>
<text x="551.50" y="734.5" textLength="60.03" lengthAdjust="spacingAndGlyphs" fill="#000000">S.C(object)</text>
<path d="M265.9 726.9 H274.7 L269.4 732.3 M266.1 727.1 L270.5 735.4 M269.3 732 L270.9 735.4" fill="none" stroke="#5e5e5e" stroke-width="1.8" stroke-linecap="round" stroke-linejoin="round"/>
<text x="309.65" y="753.5" textLength="139.41" lengthAdjust="spacingAndGlyphs" fill="#000000">14876 (ConsoleApp12.exe)</text>
<text x="457.05" y="753.5" textLength="6.35" lengthAdjust="spacingAndGlyphs" fill="#000000">3</text>
<text x="501.91" y="753.5" textLength="42.29" lengthAdjust="spacingAndGlyphs" fill="#000000">Blocked</text>
<circle cx="492" cy="749.9" r="7.7" fill="#ffffff" fill-opacity="0.8"/>
<circle cx="492" cy="749.9" r="7" fill="#3b3b3b"/>
<path d="M489.8 748.5 Q489.9 746.1999999999999 492 746.1999999999999 Q494.2 746.1999999999999 494.2 748.0 Q494.2 749.1 492.8 749.9 Q492 750.4 492 751.6" fill="none" stroke="#ffffff" stroke-width="1.6"/>
<rect x="491.15" y="753.1999999999999" width="1.7" height="1.9" fill="#ffffff"/>
<text x="551.50" y="753.5" textLength="60.03" lengthAdjust="spacingAndGlyphs" fill="#000000">S.C(object)</text>
<path d="M265.9 745.9 H274.7 L269.4 751.3 M266.1 746.1 L270.5 754.4 M269.3 751 L270.9 754.4" fill="none" stroke="#5e5e5e" stroke-width="1.8" stroke-linecap="round" stroke-linejoin="round"/>
<text x="309.65" y="772.5" textLength="139.41" lengthAdjust="spacingAndGlyphs" fill="#000000">14876 (ConsoleApp12.exe)</text>
<text x="458.00" y="772.5" textLength="6.35" lengthAdjust="spacingAndGlyphs" fill="#000000">4</text>
<text x="501.91" y="772.5" textLength="42.29" lengthAdjust="spacingAndGlyphs" fill="#000000">Blocked</text>
<circle cx="492" cy="768.9" r="7.7" fill="#ffffff" fill-opacity="0.8"/>
<circle cx="492" cy="768.9" r="7" fill="#3b3b3b"/>
<path d="M489.8 767.5 Q489.9 765.1999999999999 492 765.1999999999999 Q494.2 765.1999999999999 494.2 767.0 Q494.2 768.1 492.8 768.9 Q492 769.4 492 770.6" fill="none" stroke="#ffffff" stroke-width="1.6"/>
<rect x="491.15" y="772.1999999999999" width="1.7" height="1.9" fill="#ffffff"/>
<text x="551.50" y="772.5" textLength="60.03" lengthAdjust="spacingAndGlyphs" fill="#000000">S.C(object)</text>
<path d="M265.9 764.9 H274.7 L269.4 770.3 M266.1 765.1 L270.5 773.4 M269.3 770 L270.9 773.4" fill="none" stroke="#5e5e5e" stroke-width="1.8" stroke-linecap="round" stroke-linejoin="round"/>
</svg>
</body></html>
